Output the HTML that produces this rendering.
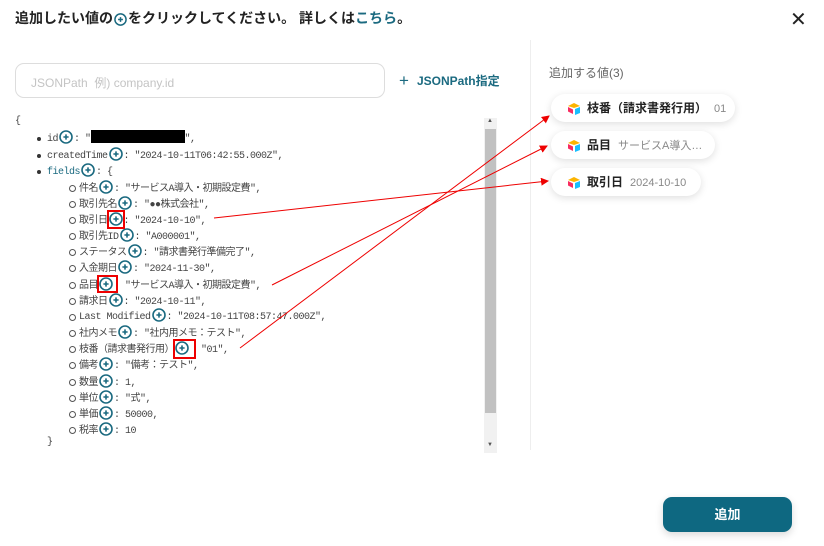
<!DOCTYPE html>
<html><head><meta charset="utf-8"><style>
*{margin:0;padding:0;box-sizing:border-box}
body{width:824px;height:546px;background:#fff;position:relative;overflow:hidden;font-family:"Liberation Sans","Noto Sans CJK JP",sans-serif;color:#333}
.abs{position:absolute}
.title{left:15px;top:8px;font-size:14px;font-weight:bold;color:#222;white-space:nowrap}
.title a{color:#1b6a80;text-decoration:none}
.pi{display:inline-block;width:14px;height:14px;vertical-align:-3px;margin:0 1px}
.input{left:15px;top:63px;width:370px;height:35px;border:1px solid #ddd;border-radius:9px;font-size:12px;color:#c4c4c4;padding:10px 15px}
.jp{left:399px;top:71px;font-size:12px;font-weight:bold;color:#1b6a80;white-space:nowrap}
.jp b{font-size:17px;font-weight:normal;margin-right:8px;vertical-align:-1px}
.code{font-family:"Liberation Mono","Noto Sans CJK JP",monospace;font-size:10px;letter-spacing:-0.5px;color:#444;white-space:nowrap}
.ln{position:absolute;white-space:nowrap}
.b1:before{content:"";position:absolute;left:-10px;top:7px;width:4px;height:4px;border-radius:50%;background:#333}
.b2:before{content:"";position:absolute;left:-10px;top:6px;width:5px;height:5px;border-radius:50%;border:1px solid #555}
.fl{color:#1b6a80}
.sb{left:484px;top:118px;width:13px;height:335px;background:#f1f1f1}
.th{left:485px;top:129px;width:11px;height:284px;background:#c1c1c1}
.div{left:530px;top:40px;width:1px;height:410px;background:#eee}
.lbl{left:549px;top:64px;font-size:12px;color:#666}
.chip{position:absolute;height:28px;border-radius:14px;background:#fff;box-shadow:0 2px 8px rgba(0,0,0,.13);font-size:12px;font-weight:bold;color:#222;padding:0 0 0 36px;line-height:28px;white-space:nowrap}
.chip span{font-weight:normal;color:#888;margin-left:7px;font-size:11px}
.chip svg{position:absolute;left:16px;top:8px}
.btn{left:663px;top:497px;width:129px;height:35px;background:#0e6881;border-radius:9px;color:#fff;font-weight:bold;font-size:13px;text-align:center;line-height:35px;box-shadow:0 3px 8px rgba(0,0,0,.15)}
.rb{position:absolute;border:2px solid #e00}
</style></head><body>
<svg width="0" height="0" style="position:absolute"><defs>
<g id="p"><circle cx="7" cy="7" r="6" fill="none" stroke="#1b6a80" stroke-width="1.6"/><path d="M4.4 7h5.2M7 4.4v5.2" stroke="#1b6a80" stroke-width="1.6"/></g>
<g id="lg"><path d="M1 4 L7 1 L13 4 L7 6Z" fill="#fcb400"/><path d="M8 7 L13 5 V11 L8 13Z" fill="#18bfff"/><path d="M1 5 L6 7.5 V12 L1 9.5Z" fill="#f82b60"/></g>
</defs></svg>
<div class="abs title">追加したい値の<svg class="pi" viewBox="0 0 14 14" style="width:13px;height:13px"><use href="#p"/></svg>をクリックしてください。 詳しくは<a>こちら</a>。</div>
<div class="abs" style="left:790px;top:7px;font-size:20px;color:#222">✕</div>
<div class="abs input">JSONPath&nbsp; 例) company.id</div>
<div class="abs jp"><b>+</b>JSONPath指定</div>
<div class="abs div"></div>
<div class="code">
<div class="ln" style="left:15px;top:116px">{</div>
<div class="ln b1" style="left:47px;top:130px">id<svg class="pi" viewBox="0 0 14 14"><use href="#p"/></svg>: "<span style="display:inline-block;width:94px;height:13px;background:#000;vertical-align:-2px"></span>",</div>
<div class="ln b1" style="left:47px;top:147px">createdTime<svg class="pi" viewBox="0 0 14 14"><use href="#p"/></svg>: "2024-10-11T06:42:55.000Z",</div>
<div class="ln b1 fl" style="left:47px;top:163px">fields<svg class="pi" viewBox="0 0 14 14"><use href="#p"/></svg><span style="color:#444">: {</span></div>
<div class="ln b2" style="left:79px;top:179px">件名<svg class="pi" viewBox="0 0 14 14"><use href="#p"/></svg>: "サービスA導入・初期設定費",</div>
<div class="ln b2" style="left:79px;top:195px">取引先名<svg class="pi" viewBox="0 0 14 14"><use href="#p"/></svg>: "●●株式会社",</div>
<div class="ln b2" style="left:79px;top:211px">取引日<svg class="pi" viewBox="0 0 14 14"><use href="#p"/></svg>: "2024-10-10",</div>
<div class="ln b2" style="left:79px;top:227px">取引先ID<svg class="pi" viewBox="0 0 14 14"><use href="#p"/></svg>: "A000001",</div>
<div class="ln b2" style="left:79px;top:243px">ステータス<svg class="pi" viewBox="0 0 14 14"><use href="#p"/></svg>: "請求書発行準備完了",</div>
<div class="ln b2" style="left:79px;top:259px">入金期日<svg class="pi" viewBox="0 0 14 14"><use href="#p"/></svg>: "2024-11-30",</div>
<div class="ln b2" style="left:79px;top:276px">品目<svg class="pi" viewBox="0 0 14 14"><use href="#p"/></svg>&nbsp; "サービスA導入・初期設定費",</div>
<div class="ln b2" style="left:79px;top:292px">請求日<svg class="pi" viewBox="0 0 14 14"><use href="#p"/></svg>: "2024-10-11",</div>
<div class="ln b2" style="left:79px;top:308px">Last Modified<svg class="pi" viewBox="0 0 14 14"><use href="#p"/></svg>: "2024-10-11T08:57:47.000Z",</div>
<div class="ln b2" style="left:79px;top:324px">社内メモ<svg class="pi" viewBox="0 0 14 14"><use href="#p"/></svg>: "社内用メモ：テスト",</div>
<div class="ln b2" style="left:79px;top:340px">枝番（請求書発行用）<svg class="pi" viewBox="0 0 14 14"><use href="#p"/></svg>&nbsp; "01",</div>
<div class="ln b2" style="left:79px;top:356px">備考<svg class="pi" viewBox="0 0 14 14"><use href="#p"/></svg>: "備考：テスト",</div>
<div class="ln b2" style="left:79px;top:373px">数量<svg class="pi" viewBox="0 0 14 14"><use href="#p"/></svg>: 1,</div>
<div class="ln b2" style="left:79px;top:389px">単位<svg class="pi" viewBox="0 0 14 14"><use href="#p"/></svg>: "式",</div>
<div class="ln b2" style="left:79px;top:405px">単価<svg class="pi" viewBox="0 0 14 14"><use href="#p"/></svg>: 50000,</div>
<div class="ln b2" style="left:79px;top:421px">税率<svg class="pi" viewBox="0 0 14 14"><use href="#p"/></svg>: 10</div>
<div class="ln" style="left:47px;top:437px">}</div>
</div>
<div class="abs sb"></div><div class="abs th"></div>
<div class="abs" style="left:487px;top:118px;font-size:6px;color:#555">▲</div>
<div class="abs" style="left:487px;top:442px;font-size:6px;color:#555">▼</div>
<div class="rb" style="left:107px;top:210px;width:18px;height:19px"></div>
<div class="rb" style="left:97px;top:275px;width:21px;height:18px"></div>
<div class="rb" style="left:173px;top:339px;width:23px;height:20px"></div>
<div class="abs lbl">追加する値(3)</div>
<div class="chip" style="left:551px;top:94px;width:184px"><svg width="14" height="13"><use href="#lg"/></svg>枝番（請求書発行用）<span>01</span></div>
<div class="chip" style="left:551px;top:131px;width:164px"><svg width="14" height="13"><use href="#lg"/></svg>品目<span>サービスA導入…</span></div>
<div class="chip" style="left:551px;top:168px;width:150px"><svg width="14" height="13"><use href="#lg"/></svg>取引日<span>2024-10-10</span></div>
<svg class="abs" style="left:0;top:0" width="824" height="546">
<defs><marker id="ar" markerWidth="8" markerHeight="8" refX="7" refY="4" orient="auto"><path d="M0 0 L8 4 L0 8Z" fill="#e00"/></marker></defs>
<line x1="214" y1="218" x2="548" y2="181" stroke="#e00" stroke-width="1" marker-end="url(#ar)"/>
<line x1="272" y1="285" x2="547" y2="146" stroke="#e00" stroke-width="1" marker-end="url(#ar)"/>
<line x1="240" y1="348" x2="549" y2="116" stroke="#e00" stroke-width="1" marker-end="url(#ar)"/>
</svg>
<div class="abs btn">追加</div>
</body></html>
